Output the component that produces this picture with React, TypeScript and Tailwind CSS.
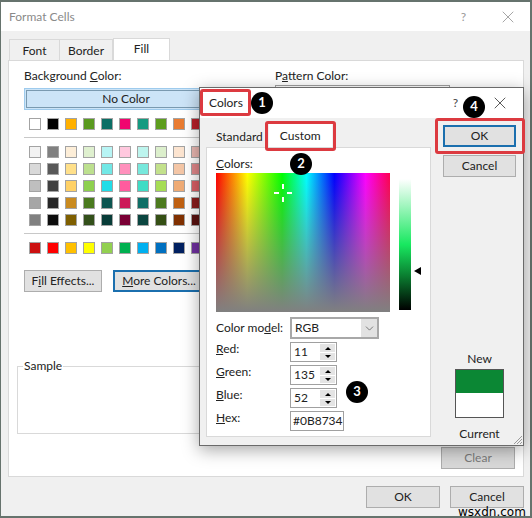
import { X, ChevronDown } from "lucide-react";

const themeRow = ["#ffffff", "#000000", "#ffb000", "#5a9a20", "#0b6e65", "#f0056f", "#149a80", "#5d9d1e", "#e97c32", "#b7202a"];

const tintRows = [
  ["#f2f2f2", "#808080", "#fdeed8", "#dff0cf", "#b8f5f5", "#ffc8de", "#bdf5ee", "#dcefcc", "#fce4d0", "#e8b6b0"],
  ["#d9d9d9", "#595959", "#ffe08a", "#bde08f", "#72e8e6", "#ff90bc", "#77e8dc", "#c3e18c", "#f4c6a6", "#e0878a"],
  ["#bfbfbf", "#404040", "#ffd166", "#8ed04e", "#20dde8", "#ff5c9e", "#3fdcc5", "#a6dd55", "#efab75", "#d95f65"],
  ["#a6a6a6", "#262626", "#c98a1e", "#4a7a1e", "#0d5550", "#cc1a58", "#0f6f66", "#4c7a1e", "#bf6012", "#8a1c1c"],
  ["#808080", "#0d0d0d", "#7f5f00", "#33501a", "#083c38", "#7a0035", "#0a4540", "#354f14", "#803000", "#5a1210"],
];

const standardRow = ["#cc1111", "#ff0000", "#ffc000", "#ffff00", "#92d050", "#00b050", "#00b0f0", "#0070c0", "#002060", "#7030a0"];

const Swatches = ({ colors }: { colors: string[] }) => (
  <div className="grid grid-cols-[repeat(10,12px)] gap-x-[6px]">
    {colors.map((c, i) => (
      <div key={i} className="h-[12px] w-[12px] border border-[#a3a3a3]" style={{ backgroundColor: c }} />
    ))}
  </div>
);

const Badge = ({ n, className }: { n: number; className: string }) => (
  <div className={`absolute flex h-[22px] w-[22px] items-center justify-center rounded-full bg-black text-[13px] font-bold text-white ${className}`}>
    {n}
  </div>
);

const Callout = ({ className }: { className: string }) => (
  <div className={`absolute rounded-[3px] border-[3px] border-[#dc3a40] ${className}`} />
);

const Spin = ({ value, label }: { value: string; label: React.ReactNode }) => (
  <div className="flex items-start">
    <div className="w-[74px] leading-[14px]">{label}</div>
    <div className="flex h-[20px] w-[47px] items-center justify-between border border-[#a0a0a0] bg-white pl-[3px] pr-[1px]">
      <span>{value}</span>
      <div className="flex h-[16px] w-[15px] flex-col justify-between">
        <div className="flex h-[8px] items-center justify-center bg-[#e4e4e4]">
          <div className="h-0 w-0 border-x-[3px] border-b-[3px] border-x-transparent border-b-black" />
        </div>
        <div className="flex h-[7px] items-center justify-center bg-[#e4e4e4]">
          <div className="h-0 w-0 border-x-[3px] border-t-[3px] border-x-transparent border-t-black" />
        </div>
      </div>
    </div>
  </div>
);

const ColorsDialog = () => (
  <div className="absolute left-[199px] top-[87px] flex h-[359px] w-[325px] flex-col border border-[#6a6a6a] bg-[#f0f0f0] shadow-[0_4px_16px_rgba(0,0,0,0.35)]">
    <div className="flex h-[30px] shrink-0 items-center bg-white pl-[9px] pr-[13px]">
      <span>Colors</span>
      <span className="ml-auto mr-[32px] text-[#444]">?</span>
      <X size={20} strokeWidth={0.9} className="text-[#222]" />
    </div>
    <div className="flex min-h-0 flex-1 pl-[6px]">
      <div className="w-[225px]">
        <div className="flex h-[29px] items-end pl-[10px]">
          <span className="pb-[1px]">Standard</span>
          <div className="ml-[6px] flex h-[24px] w-[63px] items-center justify-center bg-white pt-[2px]">Custom</div>
        </div>
        <div className="h-[290px] border border-[#d9d9d9] bg-white pl-[9px] pt-[9px]">
          <div className="h-[16px] leading-[14px]">
            <u>C</u>olors:
          </div>
          <div className="flex">
            <div className="relative h-[139px] w-[174px] bg-[linear-gradient(to_bottom,transparent,#808080),linear-gradient(to_right,#ff0000,#ffff00_18%,#00ff00_38%,#00ffff_52%,#0000ff_68%,#ff00ff_86%,#ff0050)]">
              <div className="absolute left-[66px] top-[11px] h-[5px] w-[2px] bg-white" />
              <div className="absolute left-[66px] top-[24px] h-[5px] w-[2px] bg-white" />
              <div className="absolute left-[58px] top-[19px] h-[2px] w-[5px] bg-white" />
              <div className="absolute left-[71px] top-[19px] h-[2px] w-[5px] bg-white" />
            </div>
            <div className="ml-[9px] mt-[6px] h-[131px] w-[12px] bg-[linear-gradient(to_bottom,#ffffff,#18e860_50%,#0b8734_72%,#000000)]" />
            <div className="ml-[3px] mt-[94px] h-0 w-0 border-y-[4px] border-r-[7px] border-y-transparent border-r-black" />
          </div>
          <div className="mt-[5px] flex items-center">
            <div className="w-[74px]">
              Color mo<u>d</u>el:
            </div>
            <div className="flex h-[22px] w-[89px] items-center justify-between border-2 border-[#a8a8a8] pl-[3px]">
              <span>RGB</span>
              <div className="flex h-full w-[16px] items-center justify-center bg-[#e2e2e2]">
                <ChevronDown size={13} strokeWidth={1} />
              </div>
            </div>
          </div>
          <div className="mt-[3px] flex flex-col gap-[3px]">
            <Spin value="11" label={<><u>R</u>ed:</>} />
            <Spin value="135" label={<><u>G</u>reen:</>} />
            <Spin value="52" label={<><u>B</u>lue:</>} />
            <div className="flex items-start">
              <div className="w-[74px] leading-[14px]">
                <u>H</u>ex:
              </div>
              <div className="flex h-[20px] w-[54px] items-center border border-[#a0a0a0] pl-[2px]">#0B8734</div>
            </div>
          </div>
        </div>
      </div>
      <div className="ml-[12px] flex w-[73px] flex-col items-stretch pt-[7px]">
        <div className="flex h-[22px] items-center justify-center border-2 border-[#1b6fae] bg-[#e1e1e1]">OK</div>
        <div className="mt-[8px] flex h-[22px] items-center justify-center border border-[#adadad] bg-[#e1e1e1]">Cancel</div>
        <div className="mt-[174px] text-center leading-[16px]">New</div>
        <div className="mx-auto mt-[2px] flex h-[49px] w-[49px] flex-col border border-[#555]">
          <div className="h-[23px] bg-[#0b8734]" />
          <div className="flex-1 bg-white" />
        </div>
        <div className="mt-[8px] text-center leading-[16px]">Current</div>
      </div>
    </div>
    <svg width="11" height="11" viewBox="0 0 11 11" className="absolute bottom-0 right-0">
      <path d="M10 2 2 10M10 5 5 10M10 8 8 10" stroke="#9a9a9a" strokeWidth="1" />
    </svg>
  </div>
);

export default function App() {
  return (
    <div className="relative h-[518px] w-[532px] overflow-hidden bg-[#66736d] pb-[2px] pl-[1px] pr-[2px] pt-[2px] font-['Lato',sans-serif] text-[12px] text-[#222]">
      <div className="flex h-full flex-col bg-[#f0f0f0]">
        <div className="flex h-[29px] shrink-0 items-center bg-white pl-[8px] pr-[12px] text-[#8a8a8a]">
          <span>Format Cells</span>
          <span className="ml-auto mr-[32px] text-[#999]">?</span>
          <X size={20} strokeWidth={0.9} className="text-[#888]" />
        </div>

        <div className="flex h-[29px] shrink-0 items-end pl-[8px]">
          <div className="flex h-[21px] w-[51px] items-center justify-center border border-b-0 border-[#d9d9d9] pt-[1px]">Font</div>
          <div className="flex h-[21px] w-[53px] items-center justify-center border-y border-r border-b-0 border-[#d9d9d9] pt-[1px]">Border</div>
          <div className="flex h-[22px] w-[57px] items-center justify-center border border-b-0 border-[#d9d9d9] bg-white pb-[2px]">Fill</div>
        </div>

        <div className="ml-[7px] mr-[6px] flex h-[417px] shrink-0 flex-col border border-[#d9d9d9] bg-white px-[8px] pt-[8px]">
          <div className="flex h-[292px] shrink-0 gap-[75px] pl-[7px]">
            <div className="w-[176px] shrink-0">
              <div className="h-[16px] leading-[14px]">
                Background <u>C</u>olor:
              </div>
              <div className="mt-[3px] flex h-[22px] w-[204px] items-center justify-center border border-[#9ecbed] bg-[#cce4f7] p-[1px]">
                <div className="flex h-full w-full items-center justify-center border border-[#7a9ab0]">No Color</div>
              </div>
              <div className="ml-[5px] mt-[8px]">
                <Swatches colors={themeRow} />
              </div>
              <div className="mt-[7px] h-[1px] w-[190px] bg-[#c8c8c8]" />
              <div className="ml-[5px] mt-[8px] flex flex-col gap-[5px]">
                {tintRows.map((row, i) => (
                  <Swatches key={i} colors={row} />
                ))}
              </div>
              <div className="mt-[7px] h-[1px] w-[190px] bg-[#c8c8c8]" />
              <div className="ml-[5px] mt-[8px]">
                <Swatches colors={standardRow} />
              </div>
              <div className="mt-[16px] flex gap-[11px]">
                <div className="flex h-[22px] w-[78px] shrink-0 items-center justify-center border border-[#adadad] bg-[#e1e1e1]">
                  <span>
                    F<u>i</u>ll Effects...
                  </span>
                </div>
                <div className="flex h-[22px] w-[92px] shrink-0 items-center justify-center border-2 border-[#1b6fae] bg-[#e1e1e1]">
                  <span>
                    <u>M</u>ore Colors...
                  </span>
                </div>
              </div>
            </div>
            <div className="flex-1">
              <div className="h-[16px] leading-[14px]">
                P<u>a</u>ttern Color:
              </div>
              <div className="h-[22px] w-[175px] border border-[#a0a0a0]" />
            </div>
          </div>

          <div className="relative mt-[5px] h-[68px] w-[491px] shrink-0 border border-[#d9d9d9]">
            <span className="absolute -top-[8px] left-[5px] bg-white px-[1px] leading-[14px]">Sample</span>
          </div>
          <div className="mr-0 mt-[13px] flex h-[22px] w-[74px] items-center justify-center self-end border border-[#adadad] bg-[#d8d8d8] text-[#7a7a7a]">
            Clear
          </div>
        </div>

        <div className="flex flex-1 items-start justify-end gap-[10px] pr-[6px] pt-[9px]">
          <div className="flex h-[22px] w-[74px] items-center justify-center border border-[#adadad] bg-[#e1e1e1]">OK</div>
          <div className="flex h-[22px] w-[74px] items-center justify-center border border-[#adadad] bg-[#e1e1e1]">Cancel</div>
        </div>
      </div>

      <ColorsDialog />

      <Callout className="left-[200px] top-[89px] h-[27px] w-[51px]" />
      <Callout className="left-[265px] top-[121px] h-[30px] w-[71px]" />
      <Callout className="left-[435px] top-[118px] h-[36px] w-[90px]" />

      <Badge n={1} className="left-[251px] top-[92px]" />
      <Badge n={2} className="left-[290px] top-[153px]" />
      <Badge n={3} className="left-[346px] top-[381px]" />
      <Badge n={4} className="left-[463px] top-[96px]" />

      <span className="absolute left-[458px] top-[505px] font-['DejaVu_Sans',sans-serif] text-[12px] leading-[14px] text-black">wsxdn.com</span>
    </div>
  );
}
